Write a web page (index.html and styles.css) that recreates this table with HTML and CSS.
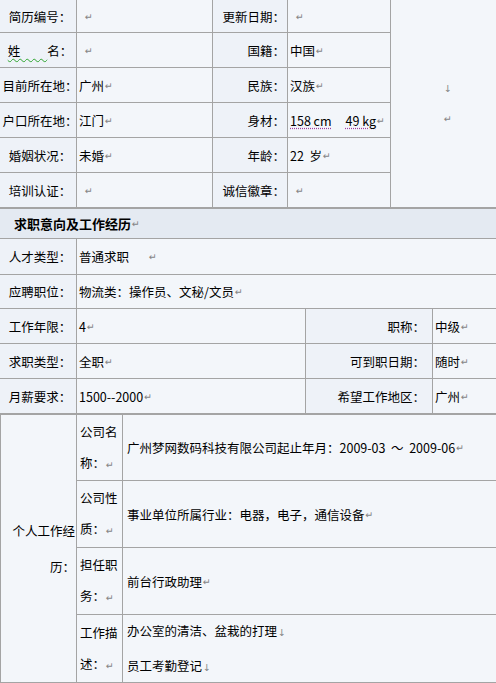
FILE: index.html
```html
<!DOCTYPE html>
<html lang="zh-CN">
<head>
<meta charset="utf-8">
<title>简历</title>
<link rel="stylesheet" href="styles.css">
</head>
<body>
<div class="sheet">
  <div class="basic">
    <div class="c lab">简历编号：</div>
    <div class="c val"><span class="pm gap">↵</span></div>
    <div class="c lab2">更新日期：</div>
    <div class="c val"><span class="pm gap">↵</span></div>
    <div class="c photo"><span class="pm">↓</span><span class="pm">↵</span></div>

    <div class="c lab"><span><span class="wavy">姓</span>名：</span></div>
    <div class="c val"><span class="pm gap">↵</span></div>
    <div class="c lab2">国籍：</div>
    <div class="c val">中国<span class="pm">↵</span></div>

    <div class="c lab">目前所在地：</div>
    <div class="c val">广州<span class="pm">↵</span></div>
    <div class="c lab2">民族：</div>
    <div class="c val">汉族<span class="pm">↵</span></div>

    <div class="c lab">户口所在地：</div>
    <div class="c val">江门<span class="pm">↵</span></div>
    <div class="c lab2">身材：</div>
    <div class="c val"><span class="dot">158 cm</span><span class="sp"></span><span class="dot">49 kg</span><span class="pm">↵</span></div>

    <div class="c lab">婚姻状况：</div>
    <div class="c val">未婚<span class="pm">↵</span></div>
    <div class="c lab2">年龄：</div>
    <div class="c val">22&nbsp; 岁<span class="pm">↵</span></div>

    <div class="c lab">培训认证：</div>
    <div class="c val"><span class="pm gap">↵</span></div>
    <div class="c lab2">诚信徽章：</div>
    <div class="c val"><span class="pm gap">↵</span></div>
  </div>

  <div class="head"><b>求职意向及工作经历</b><span class="pm">↵</span></div>

  <div class="intent">
    <div class="c lab">人才类型：</div>
    <div class="c val wide">普通求职<span class="pm far">↵</span></div>

    <div class="c lab">应聘职位：</div>
    <div class="c val wide">物流类：操作员、文秘/文员<span class="pm">↵</span></div>

    <div class="c lab">工作年限：</div>
    <div class="c val">4<span class="pm">↵</span></div>
    <div class="c lab3">职称：</div>
    <div class="c val last">中级<span class="pm">↵</span></div>

    <div class="c lab">求职类型：</div>
    <div class="c val">全职<span class="pm">↵</span></div>
    <div class="c lab3">可到职日期：</div>
    <div class="c val last">随时<span class="pm">↵</span></div>

    <div class="c lab">月薪要求：</div>
    <div class="c val">1500--2000<span class="pm">↵</span></div>
    <div class="c lab3">希望工作地区：</div>
    <div class="c val last">广州<span class="pm">↵</span></div>
  </div>

  <div class="work">
    <div class="c side"><div class="side-text">个人工作经<br>历：</div></div>

    <div class="c wlab"><div>公司名<br>称：<span class="pm">↵</span></div></div>
    <div class="c wval">广州梦网数码科技有限公司起止年月：2009-03&nbsp; ～&nbsp; 2009-06<span class="pm">↵</span></div>

    <div class="c wlab"><div>公司性<br>质：<span class="pm">↵</span></div></div>
    <div class="c wval">事业单位所属行业：电器，电子，通信设备<span class="pm">↵</span></div>

    <div class="c wlab"><div>担任职<br>务：<span class="pm">↵</span></div></div>
    <div class="c wval">前台行政助理<span class="pm">↵</span></div>

    <div class="c wlab"><div>工作描<br>述：<span class="pm">↵</span></div></div>
    <div class="c wval"><div>办公室的清洁、盆栽的打理<span class="pm">↓</span><br>员工考勤登记<span class="pm">↓</span></div></div>
  </div>
</div>
</body>
</html>
```

FILE: styles.css
```css
body {
  margin: 0;
  background: #f3f6fa;
  font-family: "Noto Sans CJK SC", "Liberation Sans", sans-serif;
  font-size: 12.5px;
  color: #000;
}

.sheet {
  width: 496px;
}

.c {
  box-sizing: border-box;
  border-right: 1px solid #a4a4a4;
  border-bottom: 1px solid #a4a4a4;
  display: flex;
  align-items: center;
  white-space: nowrap;
  min-width: 0;
}

.basic {
  display: grid;
  grid-template-columns: 77px 136px 75px 103px 105px;
  grid-template-rows: 33px 35px 35px 35px 35px 35px;
}

.lab {
  justify-content: center;
  padding-left: 4px;
  background: #eef2f8;
}

.lab2 {
  justify-content: flex-end;
  padding-right: 2px;
  background: #eef2f8;
}

.lab3 {
  justify-content: flex-end;
  padding-right: 7px;
  background: #eef2f8;
}

.val {
  padding-left: 2px;
  background: #f3f6fa;
}

.photo {
  grid-row: span 6;
  border-right: none;
  flex-direction: column;
  justify-content: center;
  padding-left: 8px;
  line-height: 30px;
  background: #f3f6fa;
}

.pm {
  font-family: "DejaVu Sans", sans-serif;
  font-size: 9.5px;
  color: #858585;
  margin-left: 1px;
}

.pm.gap {
  margin-left: 6px;
}

.pm.far {
  margin-left: 20px;
}

.wavy {
  letter-spacing: 27px;
  text-decoration: underline wavy #2fa52f;
  text-decoration-thickness: 1px;
  text-underline-offset: 2px;
}

.dot {
  text-decoration: underline dotted #a040a0;
  text-underline-offset: 2px;
}

.sp {
  display: inline-block;
  width: 14px;
}

.head {
  box-sizing: border-box;
  height: 31px;
  border-top: 1px solid #a4a4a4;
  border-bottom: 1px solid #a4a4a4;
  background: #e4eaf2;
  padding-left: 14px;
  display: flex;
  align-items: center;
}

.head b {
  font-size: 13px;
  font-weight: bold;
}

.intent {
  display: grid;
  grid-template-columns: 77px 229px 127px 63px;
  grid-template-rows: 36px 34px 35px 35px 35px;
}

.wide {
  grid-column: span 3;
  border-right: none;
}

.last {
  border-right: none;
}

.work {
  display: grid;
  grid-template-columns: 76px 46px 1fr;
  grid-template-rows: 66px 67px 67px 68px;
  border-left: 1px solid #a4a4a4;
  border-top: 1px solid #a4a4a4;
}

.side {
  grid-row: span 4;
  justify-content: flex-end;
  padding-right: 1px;
  background: #f3f6fa;
}

.side-text {
  text-align: right;
  line-height: 36px;
}

.wlab {
  padding-left: 3px;
  line-height: 31px;
  background: #f3f6fa;
}

.wval {
  padding-left: 4px;
  border-right: none;
  line-height: 33px;
  background: #f3f6fa;
}
```
